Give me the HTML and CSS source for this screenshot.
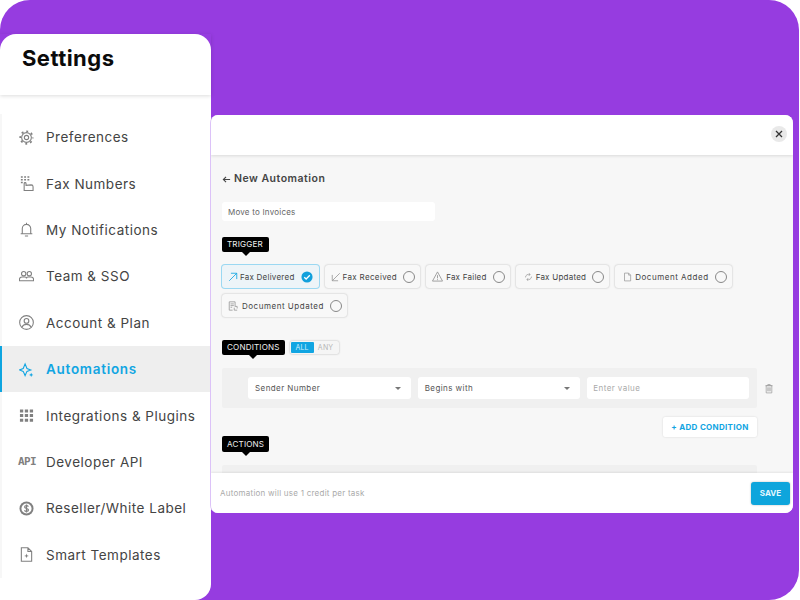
FILE: index.html
```html
<!DOCTYPE html>
<html lang="en">
<head>
<meta charset="utf-8">
<title>Settings</title>
<link rel="stylesheet" href="styles.css">
</head>
<body>
<main class="stage">
  <aside class="sidebar">
    <header class="side-head"><h1>Settings</h1></header>
    <nav class="side-list">
      <a class="side-item"><svg class="ico" viewBox="0 0 16 16"><circle class="teeth" cx="8" cy="8" r="6.700"/><circle cx="8" cy="8" r="5.200"/><circle cx="8" cy="8" r="2.300"/></svg><span>Preferences</span></a>
      <a class="side-item"><svg class="ico" viewBox="0 0 16 16"><path class="dots" d="M2 1h2M5.500 1h2M9 1h2M2 4h2M5.500 4h2M9 4h2M2 7h2"/><path d="M5.500 15.500V8c0-1.300 2-1.300 2 0v2l5.500-.5c1.200 0 2 .8 2 2v4z"/></svg><span>Fax Numbers</span></a>
      <a class="side-item"><svg class="ico" viewBox="0 0 16 16"><path d="M1.800 12.500h12.400M3.500 12.500V7a4.500 4.500 0 0 1 9 0v5.500M8 .8v1.700M6.300 15h3.400"/></svg><span>My Notifications</span></a>
      <a class="side-item"><svg class="ico" viewBox="0 0 16 16"><circle cx="5" cy="5" r="2.300"/><circle cx="11" cy="5" r="2.300"/><path d="M.5 12.500v-1.500c0-1.500 1.300-2.500 2.700-2.500h3.300c1 0 1.500.7 1.500 1.500 0-.8.500-1.500 1.500-1.500h3.300c1.400 0 2.700 1 2.700 2.500v1.500z"/></svg><span>Team &amp; SSO</span></a>
      <a class="side-item"><svg class="ico" viewBox="0 0 16 16"><circle cx="8" cy="8" r="7.300"/><circle cx="8" cy="6.300" r="2.500"/><path d="M3.300 13c.8-2.200 2.600-3 4.700-3s3.900.8 4.700 3"/></svg><span>Account &amp; Plan</span></a>
      <a class="side-item active"><svg class="ico" viewBox="0 0 16 16"><path d="M6.500 2 8.500 7l4 1.500-4 1.500-2 4.500-2-4.500-4-1.500 4-1.500z"/><path class="fill" d="M13 11.500l.7 1.600 1.600.7-1.600.7-.7 1.500-.7-1.500-1.600-.7 1.600-.7z"/></svg><span>Automations</span></a>
      <a class="side-item"><svg class="ico" viewBox="0 0 16 16"><path class="fill" d="M1 1.500h3.500v3.200H1zM6.200 1.500h3.500v3.200H6.200zM11.500 1.500H15v3.200h-3.500zM1 6.500h3.500v3.200H1zM6.200 6.500h3.500v3.200H6.200zM11.500 6.500H15v3.200h-3.500zM1 11.500h3.500v3.200H1zM6.200 11.500h3.500v3.200H6.200zM11.500 11.500H15v3.200h-3.500z"/></svg><span>Integrations &amp; Plugins</span></a>
      <a class="side-item"><span class="api">API</span><span>Developer API</span></a>
      <a class="side-item"><svg class="ico" viewBox="0 0 16 16"><circle class="fill" cx="8" cy="8" r="7.500"/><circle class="knock" cx="8" cy="8" r="5.400"/><path class="dollar" d="M10 6c-.5-.9-1.200-1.200-2-1.200-1.200 0-2 .6-2 1.500C6 8.500 10.100 7.500 10.100 9.700c0 1-.9 1.500-2.100 1.500-.9 0-1.700-.4-2.200-1.200M8 3.800v8.400"/></svg><span>Reseller/White Label</span></a>
      <a class="side-item"><svg class="ico" viewBox="0 0 16 16"><path d="M2.500 .8h7l4 4v10.400h-11zM9.500 .8v4h4"/><path class="fill" d="M8 7l.6 1.900 1.900.6-1.900.6L8 12l-.6-1.900-1.900-.6 1.900-.6z"/></svg><span>Smart Templates</span></a>
    </nav>
  </aside>

  <section class="modal">
    <header class="modal-head">
      <button class="close" aria-label="Close"><svg viewBox="0 0 10 10"><path d="M2 2l6 6M8 2l-6 6"/></svg></button>
    </header>
    <div class="modal-body">
      <h2 class="title"><svg viewBox="0 0 10 10"><path d="M9 5H1.500M4.500 2 1.500 5l3 3"/></svg>New Automation</h2>
      <div class="name-input">Move to Invoices</div>

      <div class="tag tag-trigger">TRIGGER</div>
      <div class="chips">
        <div class="chip selected"><svg class="chip-ico blue" viewBox="0 0 12 12"><path d="M1.500 10.500 10.500 1.500M3.500 1.500h7v7"/></svg><span>Fax Delivered</span><svg class="radio" viewBox="0 0 14 14"><circle class="on" cx="7" cy="7" r="6.500"/><path class="tick" d="M3.800 7.200 6 9.300l4.300-4.400"/></svg></div>
        <div class="chip received"><svg class="chip-ico" viewBox="0 0 12 12"><path d="M10.500 1.500 1.500 10.500M8.500 10.500h-7v-7"/></svg><span>Fax Received</span><span class="circle"></span></div>
        <div class="chip"><svg class="chip-ico wide" viewBox="0 0 12 12"><path d="M6 1 11.500 11H.5zM6 4.500V8M6 9v1"/></svg><span>Fax Failed</span><span class="circle"></span></div>
        <div class="chip inset"><svg class="chip-ico" viewBox="0 0 12 12"><path d="M2 6.500a4 4 0 0 1 6-3.500M7 1l1.200 2-2 .9M10 5.500a4 4 0 0 1-6 3.500M5 11 3.800 9l2-.9"/></svg><span>Fax Updated</span><span class="circle"></span></div>
        <div class="chip inset doc"><svg class="chip-ico" viewBox="0 0 12 12"><path d="M2 .8h5.500l2.700 2.700v7.700H2zM7.500.8v2.700h2.700"/></svg><span>Document Added</span><span class="circle"></span></div>
        <div class="chip doc updated"><svg class="chip-ico" viewBox="0 0 12 12"><path d="M8.500 6V1H1.500v10h4M3 3.500h4M3 5.500h4M3 7.500h2M8 6.500h3v2.500M11 11H7.500V8"/></svg><span>Document Updated</span><span class="circle"></span></div>
      </div>

      <div class="cond-row">
        <div class="tag">CONDITIONS</div>
        <div class="toggle"><span class="toggle-on">ALL</span><span class="toggle-off">ANY</span></div>
      </div>
      <div class="cond-line">
        <div class="cond-box">
          <div class="field select"><span>Sender Number</span><i class="caret"></i></div>
          <div class="field select"><span>Begins with</span><i class="caret"></i></div>
          <div class="field placeholder">Enter value</div>
        </div>
        <svg class="trash" viewBox="0 0 10 12"><path d="M.5 2.500h9M3.500 2.500V1h3v1.500M1.500 2.500h7v9h-7zM3.500 4.500v5M5 4.500v5M6.500 4.500v5"/></svg>
      </div>
      <div class="add-row"><button class="add">+ ADD CONDITION</button></div>
      <div class="tag tag-actions">ACTIONS</div>
      <div class="actions-box"></div>
    </div>
    <footer class="modal-foot">
      <span class="note">Automation will use 1 credit per task</span>
      <button class="save">SAVE</button>
    </footer>
  </section>
</main>
</body>
</html>
```
FILE: styles.css
```css
* { box-sizing: border-box; }
html, body { margin: 0; padding: 0; background: #fff; }
body { width: 800px; height: 600px; overflow: hidden; font-family: Inter, "Liberation Sans", sans-serif; }

.stage {
  width: 799px; height: 600px;
  background: #963ce0;
  border-radius: 30px;
  display: flex;
  align-items: flex-start;
  padding-top: 34px;
}

/* Sidebar */
.sidebar {
  width: 211px; height: 566px; flex: none;
  background: #fff;
  border-radius: 16px 16px 16px 0;
  display: flex; flex-direction: column;
}
.side-head {
  height: 61px; flex: none;
  padding: 11px 0 0 22px;
  box-shadow: 0 1px 4px rgba(0,0,0,.14);
}
.side-head h1 { margin: 0; font-size: 22px; line-height: 27px; font-weight: 700; color: #0b0b0b; letter-spacing: .46px; }
.side-list { margin-top: 19px; border-left: 2px solid #f7f7f7; }
.side-item {
  display: flex; align-items: center;
  height: 46.4px;
  margin-left: -2px;
  padding-left: 19px;
  color: #444;
  font-size: 13.5px;
  letter-spacing: .5px;
  white-space: nowrap;
}
.side-item.active {
  background: #eee;
  border-left: 2px solid #0ea5e0;
  padding-left: 17px;
  color: #11a5e2;
  font-weight: 600;
  letter-spacing: .72px;
}
.ico {
  width: 15px; height: 15px; flex: none; margin-right: 12px;
  fill: none; stroke: #808080; stroke-width: 1.15;
}
.ico .fill { fill: #808080; stroke: none; }
.ico .knock { fill: #fff; stroke: none; }
.ico .dollar { stroke-width: 1.3; }
.ico .dots { stroke-width: 1.5; }
.ico .teeth { stroke-width: 1.8; stroke-dasharray: 2.1 3.16; stroke-dashoffset: 1.05; }
.active .ico { stroke: #11a5e2; }
.active .ico .fill { fill: #11a5e2; }
.api {
  width: 18px; flex: none; margin-right: 10px; margin-left: -1px;
  font-family: "DejaVu Sans Mono", monospace; font-size: 11px; font-weight: 700;
  color: #808080; letter-spacing: -.6px;
}

/* Modal */
.modal {
  width: 583px; height: 398px; flex: none;
  margin-top: 81px; margin-left: -1px;
  border-radius: 8px;
  border-left: 1px solid #dcc2f8;
  background: #f7f7f7;
  overflow: hidden;
  display: flex; flex-direction: column;
  position: relative;
}
.modal-head {
  height: 40px; flex: none;
  background: #fff;
  box-shadow: 0 1px 3px rgba(0,0,0,.12);
  display: flex; justify-content: flex-end; align-items: flex-start;
  padding: 11px 0 0;
  position: relative; z-index: 1;
}
.close {
  width: 16px; height: 16px; margin-right: 6px;
  padding: 3px; border: 0; border-radius: 50%;
  background: #e9e9e9;
}
.close svg { display: block; width: 10px; height: 10px; fill: none; stroke: #333; stroke-width: 1.3; }

.modal-body { flex: 1; min-height: 0; overflow: hidden; padding: 0 0 0 11px; }
.title {
  margin: 17px 0 0;
  display: flex; align-items: center;
  height: 13px;
  font-size: 10.5px; font-weight: 600; color: #444; letter-spacing: .5px;
}
.title svg { width: 9px; height: 9px; margin-right: 3px; margin-top: 2px; fill: none; stroke: #444; stroke-width: 1.2; }
.name-input {
  margin-top: 17px;
  width: 213px; height: 19px;
  background: #fff; border-radius: 3px;
  padding-left: 6px;
  font-size: 8px; line-height: 20px; color: #666; letter-spacing: .22px;
}
.tag {
  position: relative;
  display: inline-block; flex: none;
  height: 15px; padding: 0 5px;
  background: #000; color: #eee; border-radius: 2px;
  font-size: 8.1px; font-weight: 400; line-height: 15px; letter-spacing: .15px;
}
.tag::after {
  content: ""; position: absolute; left: 50%; top: 100%; margin-left: -4px;
  border: 4px solid transparent; border-bottom: 0; border-top-color: #000;
}
.tag-trigger { display: block; width: 47px; margin-top: 16px; }

.chips { display: flex; flex-wrap: wrap; gap: 6px; margin-top: 13px; width: 525px; }
.chip {
  display: flex; align-items: center;
  height: 23px; padding: 0 5px 0 6px;
  background: #f8f8f8; border-radius: 3px;
  box-shadow: 0 0 2px rgba(0,0,0,.28);
  font-size: 8px; letter-spacing: .24px; color: #444;
  white-space: nowrap;
}
.chip.selected { background: #edf4f8; box-shadow: 0 0 0 1px #9bd8f2; padding-right: 6px; }
.chip.received { letter-spacing: .35px; }
.chip-ico { width: 10px; height: 10px; margin-right: 2px; fill: none; stroke: #999; stroke-width: 1; flex: none; }
.chip-ico.blue { stroke: #11a5e2; }
.chip-ico.wide { width: 11px; height: 11px; margin-right: 3px; }
.chip.inset { padding-left: 8px; }
.chip.inset .chip-ico { width: 9px; margin-right: 3px; }
.chip.doc { letter-spacing: .52px; }
.chip.updated .chip-ico { margin-right: 4px; }
.radio { width: 12px; height: 12px; margin-left: 6px; flex: none; }
.radio .on { fill: #11a0dc; }
.radio .tick { fill: none; stroke: #fff; stroke-width: 1.5; }
.circle { width: 12px; height: 12px; margin-left: 6px; flex: none; border: 1px solid #888; border-radius: 50%; }

.cond-row { display: flex; align-items: center; gap: 5px; margin-top: 23px; }
.toggle {
  display: flex; width: 49px; height: 13px; padding: 1px;
  background: #f5f5f5; border-radius: 2px; box-shadow: 0 0 2px rgba(0,0,0,.3);
  font-size: 7px; line-height: 11px; text-align: center; letter-spacing: .2px;
}
.toggle-on { flex: none; width: 23px; background: #11a5e2; color: #cfeefc; border-radius: 1px; }
.toggle-off { flex: 1; color: #b5b5b5; }

.cond-line { display: flex; align-items: center; margin-top: 13px; }
.cond-box {
  width: 535px; height: 40px; flex: none;
  background: #f0f0f0; border-radius: 2px;
  display: flex; gap: 7px; align-items: center;
  padding: 0 8px 0 26px;
}
.field {
  flex: 1; height: 22px;
  background: #fff; border-radius: 3px;
  display: flex; align-items: center; justify-content: space-between;
  padding: 0 10px 0 7px;
  font-size: 8px; letter-spacing: .42px; color: #555;
}
.field.placeholder { color: #aaa; padding-left: 6px; }
.caret { border: 3px solid transparent; border-top-color: #777; border-bottom: 0; }
.trash { width: 8px; height: 11px; margin-left: 8px; fill: none; stroke: #999; stroke-width: .9; flex: none; }

.add-row { width: 535px; display: flex; justify-content: flex-end; margin-top: 9px; }
.add {
  width: 94px; height: 20px; padding: 0; border: 0;
  background: #fff; border-radius: 2px;
  box-shadow: 0 0 2px rgba(0,0,0,.15);
  font-family: inherit; font-size: 8px; font-weight: 700; color: #11a5e2; letter-spacing: .3px;
}
.tag-actions { display: block; width: 47px; height: 16px; line-height: 16px; margin-top: -1px; }
.actions-box { width: 535px; height: 40px; margin-top: 13px; background: #f0f0f0; border-radius: 2px; }

.modal-foot {
  height: 40px; flex: none;
  background: #fff;
  box-shadow: 0 -1px 2px rgba(0,0,0,.08);
  display: flex; align-items: center; justify-content: space-between;
  padding: 0 3px 0 9px;
  position: relative; z-index: 1;
}
.note { font-size: 8px; letter-spacing: .24px; color: #aaa; }
.save {
  width: 39px; height: 23px; padding: 0; border: 0; border-radius: 3px;
  background: #0ea5dc; color: #e6f7ff;
  font-family: inherit; font-size: 8px; font-weight: 700;
  box-shadow: 0 0 2px rgba(0,0,0,.3);
}
```
